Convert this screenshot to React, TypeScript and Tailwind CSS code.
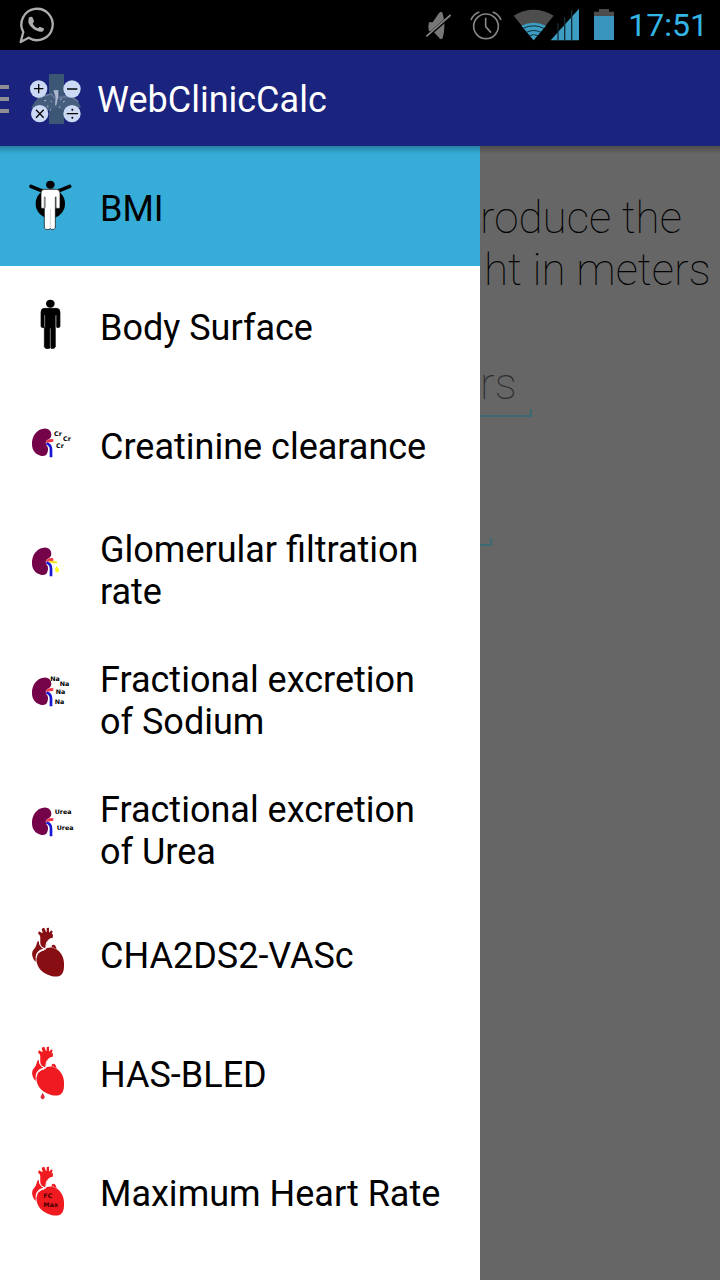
import type { ReactNode } from "react";

function KidneyIcon({ children }: { children?: ReactNode }) {
  return (
    <g transform="translate(0 30)">
      <path
        d="M71 41C84 39 94 48 94 59C94 66 90 71 83 74C77 77 76 84 79 91C85 97 86 105 82 113C80 121 71 125 62 122C47 119 36 106 36 88C35 64 50 43 71 41Z"
        fill="#74034a"
      />
      <path d="M79 85C88 88 93 94 93 104V127" fill="none" stroke="#1717d8" strokeWidth="8" />
      <path d="M78 78L88 73L100 72L100 80L91 82L80 83Z" fill="#f1364a" />
      {children}
    </g>
  );
}

function Tag({ x, y, children }: { x: number; y: number; children: string }) {
  return (
    <text x={x} y={y} fontSize="19" fontWeight="700" fontFamily="'DejaVu Sans', sans-serif" fill="#000">
      {children}
    </text>
  );
}

function HeartIcon({ color, children }: { color: string; children?: ReactNode }) {
  return (
    <g>
      <g fill={color}>
        <path d="M73 104C82 96 95 95 106 101C121 108 132 125 132 145C133 166 129 178 120 182C101 190 75 178 62 165C50 152 46 132 52 118C57 109 64 108 73 104Z" />
        <path d="M61 93C60 79 62 68 60 62L54 55L57 49L66 54L68 53L65 41L73 38L78 51L80 50V39L87 38V52L90 51L93 46L98 49L95 58L99 58L98 69C86 70 81 79 79 91L76 99C68 99 63 97 61 93Z" />
        <path d="M56 77C57 89 61 97 70 101C57 104 49 111 47 125V141C38 131 34 119 38 108L46 97C51 90 49 81 56 77Z" />
        <path d="M95 92C101 86 108 89 110 104C103 98 99 97 95 98Z" />
      </g>
      <path d="M58 80C59 92 66 99 78 103M78 98C77 85 82 72 98 70M49 128C51 114 60 108 73 105" fill="none" stroke="#fff" strokeWidth="3" />
      {children}
    </g>
  );
}

function Person({ fill, outline }: { fill: string; outline: string }) {
  return (
    <g fill={fill} stroke={outline} strokeWidth="2">
      <path d="M73 58H109Q120 58 120 70V113Q114 119 108 113V81H106V174Q104 180 93 178L91 175L89 178Q75 181 73 174V81H75V113Q69 119 63 113V70Q63 58 73 58Z" />
      <path d="M91 118V176M74 78V115M108 78V115" fill="none" stroke="#bbb" strokeWidth="2" />
    </g>
  );
}

const bmi = (
  <g transform="translate(0 9)">
    <circle cx="91" cy="101" r="44" />
    <path d="M33 49L62 61L91 69L120 61L149 49" fill="none" stroke="#000" strokeWidth="11" strokeLinecap="round" />
    <ellipse cx="91" cy="44" rx="13" ry="12" />
    <Person fill="#fff" outline="#000" />
  </g>
);

const bodySurface = (
  <g transform="translate(0 9)">
    <ellipse cx="91" cy="44" rx="13" ry="12" />
    <Person fill="#000" outline="#000" />
  </g>
);

const calculators: { name: string; icon: ReactNode }[] = [
  { name: "BMI", icon: bmi },
  { name: "Body Surface", icon: bodySurface },
  {
    name: "Creatinine clearance",
    icon: (
      <KidneyIcon>
        <Tag x={102} y={62}>Cr</Tag>
        <Tag x={129} y={78}>Cr</Tag>
        <Tag x={108} y={98}>Cr</Tag>
      </KidneyIcon>
    ),
  },
  {
    name: "Glomerular filtration rate",
    icon: (
      <KidneyIcon>
        <path d="M86 80L111 82V88H98L88 85Z" fill="#f5e51d" />
        <path d="M110 96L118 108Q117 116 110 115Q104 112 105 105Z" fill="#fff81c" />
        <circle cx="129" cy="96" r="2" fill="#fff98a" />
      </KidneyIcon>
    ),
  },
  {
    name: "Fractional excretion of Sodium",
    icon: (
      <KidneyIcon>
        <Tag x={91} y={50}>Na</Tag>
        <Tag x={119} y={65}>Na</Tag>
        <Tag x={107} y={89}>Na</Tag>
        <Tag x={104} y={120}>Na</Tag>
      </KidneyIcon>
    ),
  },
  {
    name: "Fractional excretion of Urea",
    icon: (
      <KidneyIcon>
        <Tag x={104} y={59}>Urea</Tag>
        <Tag x={110} y={109}>Urea</Tag>
      </KidneyIcon>
    ),
  },
  {
    name: "CHA2DS2-VASc",
    icon: (
      <g transform="translate(0 3)">
        <HeartIcon color="#870f14" />
      </g>
    ),
  },
  {
    name: "HAS-BLED",
    icon: (
      <g transform="translate(0 3)">
        <HeartIcon color="#f01b20">
          <path d="M68 176C70 182 75 185 74 190C73 198 63 198 62 190C61 185 66 182 68 176Z" fill="#e02c38" />
        </HeartIcon>
      </g>
    ),
  },
  {
    name: "Maximum Heart Rate",
    icon: (
      <g transform="translate(0 6)">
        <HeartIcon color="#f01b20">
          <g fill="#400" fontSize="19" fontWeight="700" fontFamily="'DejaVu Sans', sans-serif">
            <text x="70" y="132">FC</text>
            <text x="70" y="158">Max</text>
          </g>
        </HeartIcon>
      </g>
    ),
  },
];

function StatusBar() {
  return (
    <div className="flex h-[50px] shrink-0 items-center justify-between bg-black pr-3 pl-4">
      <svg viewBox="48 0 120 150" className="h-[50px] w-10" aria-label="WhatsApp">
        <path d="M62 126L70 96A47 47 0 1 1 86 113Z" fill="none" stroke="#adadad" strokeWidth="7" strokeLinejoin="round" />
        <path d="M86 53Q91 48 97 51L102 63Q101 68 98 71Q104 82 114 85L119 80L131 85Q134 92 126 95C112 98 89 82 85 67Z" fill="#adadad" />
      </svg>
      <div className="flex items-center gap-2">
        <svg viewBox="30 0 600 150" className="h-[50px] w-[200px]" aria-label="Muted, alarm set, Wi-Fi, signal, battery">
          <path d="M57 67H68L87 39Q91 34 97 37Q109 75 98 115Q91 121 86 112L69 94H57Q53 80 57 67Z" fill="#777" />
          <path d="M47 113L125 44" stroke="#000" strokeWidth="10" />
          <path d="M49 109L122 45" stroke="#858585" strokeWidth="5" />
          <g fill="none" stroke="#858585" strokeWidth="5">
            <circle cx="228" cy="79" r="37" />
            <path d="M227 53V80L243 98M183 60Q190 42 208 36M248 36Q266 42 273 60" />
          </g>
          <path d="M311 47Q370 12 431 47L371 121Z" fill="#4d4d4d" />
          <path d="M334 77Q370 60 408 77L371 121Z" fill="#3d9dc3" />
          <path d="M339 85Q371 70 402 85M349 97Q371 86 393 97M358 107Q371 101 384 107" fill="none" stroke="#102e38" strokeWidth="3" />
          <path d="M422 121L507 26V121Z" fill="#3d9dc3" />
          <path d="M444 70V122M464 50V122M485 30V122" stroke="#102e38" strokeWidth="4" />
          <path d="M552 35H567V27H597V35H612V49H552Z" fill="#4d4d4d" />
          <path d="M552 48H612V120H552Z" fill="#3995bd" />
        </svg>
        <time className="text-[32px] leading-[50px] text-[#33b5e5]">17:51</time>
      </div>
    </div>
  );
}

function AppLogo() {
  return (
    <svg viewBox="84 216 165 156" className="h-[52px] w-[55px]" aria-hidden="true">
      <path d="M147 219H192V369H147Z" fill="#3c5675" />
      <path d="M94 320Q112 281 145 279L168 286L196 279Q231 285 243 318L207 332L168 321L129 334Z" fill="#465e7d" />
      <path d="M112 291L154 279L165 291L212 286L235 302" fill="none" stroke="#65799a" strokeWidth="5" />
      <path d="M160 268L175 267V285L169 313L165 313L167 289Z" fill="#abb7cf" />
      <path d="M152 300L155 302M181 296L185 294M189 303L194 301M141 315L145 317M177 318L181 318M133 299L138 298M150 326L153 327" stroke="#bac7dc" strokeWidth="3" />
      <g fill="#cbd9f5">
        <circle cx="116" cy="264" r="26" />
        <circle cx="216" cy="264" r="26" />
        <circle cx="119" cy="338" r="26" />
        <circle cx="216" cy="338" r="26" />
      </g>
      <path d="M102 263H130M116 249V277M201 264H232M108 326L131 350M131 326L108 350M200 338H234" stroke="#050505" strokeWidth="4" />
      <circle cx="217" cy="326" r="3" />
      <circle cx="217" cy="350" r="3" />
    </svg>
  );
}

function AppBar() {
  return (
    <header className="flex h-24 shrink-0 items-center bg-[#1a237e] pt-0.5">
      <button type="button" aria-label="Toggle menu" className="flex flex-col gap-2">
        <span className="h-1 w-[9px] bg-[#8e8e94]" />
        <span className="h-1 w-[9px] bg-[#8e8e94]" />
        <span className="h-1 w-[9px] bg-[#8e8e94]" />
      </button>
      <div className="ml-[19px]">
        <AppLogo />
      </div>
      <h1 className="ml-3.5 pt-0.5 text-[36px] leading-[42px] text-white">WebClinicCalc</h1>
    </header>
  );
}

function Drawer() {
  return (
    <nav className="w-2/3 shrink-0 border-t border-[#34acd6] bg-white" aria-label="Calculators">
      <ul>
        {calculators.map((item, index) => (
          <li key={item.name}>
            <button
              type="button"
              className={
                index === 0
                  ? "flex min-h-[119px] w-full items-start bg-[#35add8] pl-5 text-left"
                  : "flex min-h-[119px] w-full items-start bg-white pl-5 text-left"
              }
            >
              <svg viewBox="0 0 240 237" className="mt-5 h-[79px] w-20 shrink-0" aria-hidden="true">
                {item.icon}
              </svg>
              <span className="flex min-h-[119px] items-center pt-[25px] pr-8 pb-[21px] text-[36px] leading-[42px] text-black">
                {item.name}
              </span>
            </button>
          </li>
        ))}
      </ul>
    </nav>
  );
}

function Field({ label, hint, inputClass }: { label: string; hint?: string; inputClass: string }) {
  return (
    <div className="flex items-end">
      <input aria-label={label} placeholder={hint} className={inputClass} />
      <span className="h-2 w-0.5 bg-[#3b6a73]" />
    </div>
  );
}

function FormPane() {
  return (
    <main className="min-w-0 flex-1 overflow-hidden bg-[#666] pt-[46px]">
      <p className="text-[44px] leading-[52px] font-thin whitespace-nowrap text-black">
        roduce the
        <br />
        <span className="pl-1">ht in meters</span>
      </p>
      <div className="mt-[60px] flex flex-col gap-[68px]">
        <Field
          label="Height"
          hint="rs"
          inputClass="h-[61px] w-[50px] border-b-2 border-[#3b6a73] bg-transparent pb-1 text-[44px] font-thin outline-none placeholder:text-[#2e2e2e]"
        />
        <Field
          label="Weight"
          inputClass="h-[61px] w-[10px] border-b-2 border-[#3b6a73] bg-transparent text-[44px] font-thin outline-none"
        />
      </div>
    </main>
  );
}

export default function App() {
  return (
    <div className="flex min-h-screen flex-col bg-[#666] font-['Roboto',sans-serif]">
      <StatusBar />
      <AppBar />
      <div className="relative flex flex-1">
        <Drawer />
        <FormPane />
        <div className="pointer-events-none absolute inset-x-0 top-0 h-2 bg-linear-to-b from-black/25 to-transparent" />
      </div>
    </div>
  );
}
